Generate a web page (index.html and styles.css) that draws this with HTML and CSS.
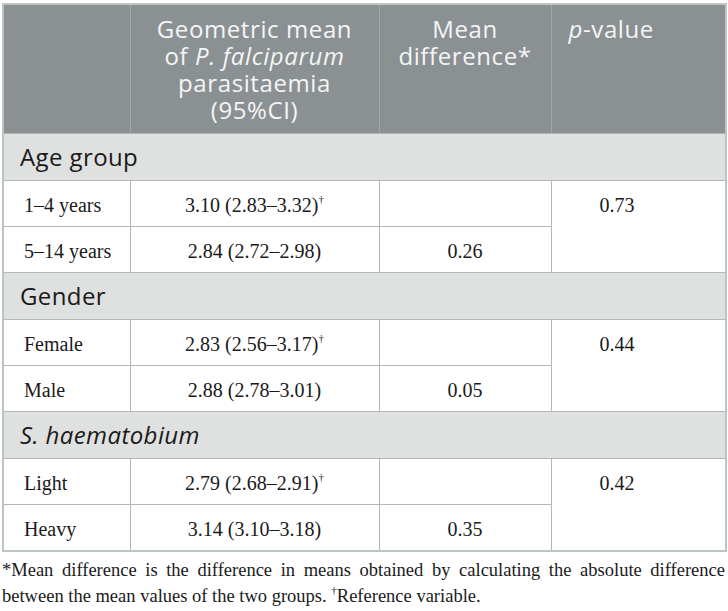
FILE: index.html
```html
<!DOCTYPE html>
<html lang="en">
<head>
    <meta charset="UTF-8">
    <meta name="viewport" content="width=device-width, initial-scale=1.0">
    <title>Parasitaemia by group</title>
    <link rel="stylesheet" href="styles.css">
</head>
<body>
    <table class="results">
        <colgroup>
            <col class="c-label">
            <col class="c-mean">
            <col class="c-diff">
            <col class="c-p">
        </colgroup>
        <thead>
            <tr class="head">
                <th></th>
                <th>Geometric mean<br>of <i>P. falciparum</i><br>parasitaemia<br>(95%CI)</th>
                <th>Mean<br>difference*</th>
                <th class="left"><i>p</i>-value</th>
            </tr>
        </thead>
        <tbody>
            <tr class="group"><td colspan="4">Age group</td></tr>
            <tr>
                <td class="label">1–4 years</td>
                <td>3.10 (2.83–3.32)<sup>†</sup></td>
                <td></td>
                <td class="pval" rowspan="2">0.73</td>
            </tr>
            <tr>
                <td class="label">5–14 years</td>
                <td>2.84 (2.72–2.98)</td>
                <td class="diff">0.26</td>
            </tr>

            <tr class="group"><td colspan="4">Gender</td></tr>
            <tr>
                <td class="label">Female</td>
                <td>2.83 (2.56–3.17)<sup>†</sup></td>
                <td></td>
                <td class="pval" rowspan="2">0.44</td>
            </tr>
            <tr>
                <td class="label">Male</td>
                <td>2.88 (2.78–3.01)</td>
                <td class="diff">0.05</td>
            </tr>

            <tr class="group"><td colspan="4"><i>S. haematobium</i></td></tr>
            <tr>
                <td class="label">Light</td>
                <td>2.79 (2.68–2.91)<sup>†</sup></td>
                <td></td>
                <td class="pval" rowspan="2">0.42</td>
            </tr>
            <tr>
                <td class="label">Heavy</td>
                <td>3.14 (3.10–3.18)</td>
                <td class="diff">0.35</td>
            </tr>
        </tbody>
    </table>
    <p class="note">*Mean difference is the difference in means obtained by calculating the absolute difference between the mean values of the two groups. <sup>†</sup>Reference variable.</p>
</body>
</html>
```

FILE: styles.css
```css
body {
    margin: 0;
    padding: 3px 3px 0 2px;
    background: white;
    color: #1a1a1a;
    font-family: "Liberation Serif", "Times New Roman", serif;
}

.results {
    width: 723px;
    border-collapse: collapse;
    border: 2px solid #bcc5be;
    table-layout: fixed;
}

.c-label { width: 127px; }
.c-mean { width: 249px; }
.c-diff { width: 172px; }
.c-p { width: 175px; }

.head th {
    background: #8b9193;
    color: #f4f5f5;
    font-family: "Open Sans", sans-serif;
    font-weight: normal;
    font-size: 24px;
    letter-spacing: 0.6px;
    line-height: 27px;
    text-align: center;
    vertical-align: top;
    padding: 10px 4px 10px;
    border-left: 1px solid #a3a8a9;
}

.head th:first-child {
    border-left: none;
}

.head th.left {
    text-align: left;
    padding-left: 17px;
}

td {
    font-size: 20px;
    line-height: 26px;
    height: 26px;
    padding: 11px 10px 8px;
    text-align: center;
    vertical-align: top;
    border: 1px solid #b3b6b4;
}

.group td {
    background: #dfe1e0;
    font-family: "Open Sans", sans-serif;
    font-size: 24px;
    letter-spacing: 0.4px;
    line-height: 27px;
    height: 27px;
    text-align: left;
    padding: 9px 16px 10px;
}

td.label {
    text-align: left;
    padding-left: 20px;
}

td.pval {
    text-align: left;
    padding-left: 48px;
}

td sup {
    font-size: 11px;
    line-height: 0;
    vertical-align: 9px;
}

.note {
    margin: 5px 0 0;
    width: 723px;
    font-size: 18.5px;
    line-height: 26px;
    text-align: justify;
}

.note sup {
    font-size: 11px;
    line-height: 0;
    vertical-align: 8px;
}
```
